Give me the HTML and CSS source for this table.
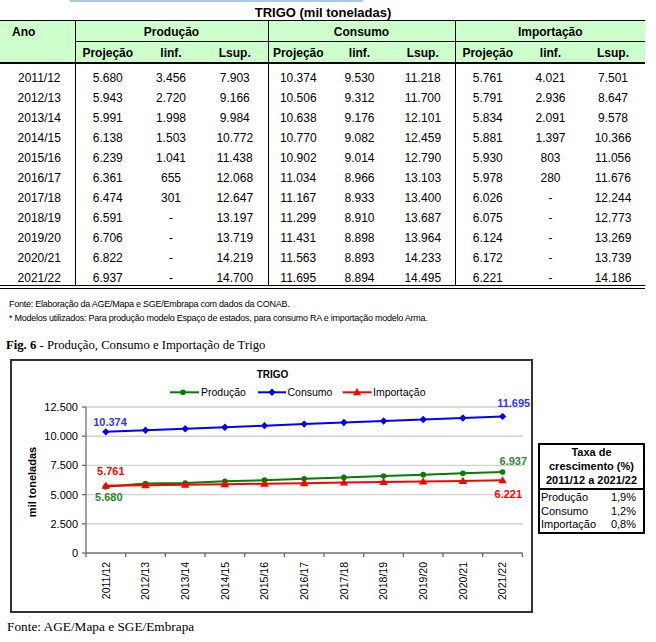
FILE: index.html
```html
<!DOCTYPE html>
<html lang="pt">
<head>
<meta charset="utf-8">
<title>Trigo</title>
<link rel="stylesheet" href="styles.css">
</head>
<body>
<div class="rule"></div>
<div class="title">TRIGO (mil toneladas)</div>
<table class="grid">
  <colgroup>
    <col style="width:75px"><col style="width:65px"><col style="width:62px"><col style="width:66px"><col style="width:60px"><col style="width:63px"><col style="width:64px"><col style="width:65px"><col style="width:61px"><col style="width:64px">
  </colgroup>
  <thead>
    <tr class="h1">
      <th rowspan="2" class="ano">Ano</th>
      <th colspan="3" class="g">Produção</th>
      <th colspan="3" class="g">Consumo</th>
      <th colspan="3" class="g">Importação</th>
    </tr>
    <tr class="h2">
      <th class="g">Projeção</th><th>linf.</th><th>Lsup.</th>
      <th class="g">Projeção</th><th>linf.</th><th>Lsup.</th>
      <th class="g">Projeção</th><th>linf.</th><th>Lsup.</th>
    </tr>
  </thead>
  <tbody>
    <tr class="first"><td class="yr">2011/12</td><td class="g">5.680</td><td>3.456</td><td>7.903</td><td class="g">10.374</td><td>9.530</td><td>11.218</td><td class="g">5.761</td><td>4.021</td><td>7.501</td></tr>
    <tr><td class="yr">2012/13</td><td class="g">5.943</td><td>2.720</td><td>9.166</td><td class="g">10.506</td><td>9.312</td><td>11.700</td><td class="g">5.791</td><td>2.936</td><td>8.647</td></tr>
    <tr><td class="yr">2013/14</td><td class="g">5.991</td><td>1.998</td><td>9.984</td><td class="g">10.638</td><td>9.176</td><td>12.101</td><td class="g">5.834</td><td>2.091</td><td>9.578</td></tr>
    <tr><td class="yr">2014/15</td><td class="g">6.138</td><td>1.503</td><td>10.772</td><td class="g">10.770</td><td>9.082</td><td>12.459</td><td class="g">5.881</td><td>1.397</td><td>10.366</td></tr>
    <tr><td class="yr">2015/16</td><td class="g">6.239</td><td>1.041</td><td>11.438</td><td class="g">10.902</td><td>9.014</td><td>12.790</td><td class="g">5.930</td><td>803</td><td>11.056</td></tr>
    <tr><td class="yr">2016/17</td><td class="g">6.361</td><td>655</td><td>12.068</td><td class="g">11.034</td><td>8.966</td><td>13.103</td><td class="g">5.978</td><td>280</td><td>11.676</td></tr>
    <tr><td class="yr">2017/18</td><td class="g">6.474</td><td>301</td><td>12.647</td><td class="g">11.167</td><td>8.933</td><td>13.400</td><td class="g">6.026</td><td>-</td><td>12.244</td></tr>
    <tr><td class="yr">2018/19</td><td class="g">6.591</td><td>-</td><td>13.197</td><td class="g">11.299</td><td>8.910</td><td>13.687</td><td class="g">6.075</td><td>-</td><td>12.773</td></tr>
    <tr><td class="yr">2019/20</td><td class="g">6.706</td><td>-</td><td>13.719</td><td class="g">11.431</td><td>8.898</td><td>13.964</td><td class="g">6.124</td><td>-</td><td>13.269</td></tr>
    <tr><td class="yr">2020/21</td><td class="g">6.822</td><td>-</td><td>14.219</td><td class="g">11.563</td><td>8.893</td><td>14.233</td><td class="g">6.172</td><td>-</td><td>13.739</td></tr>
    <tr class="last"><td class="yr">2021/22</td><td class="g">6.937</td><td>-</td><td>14.700</td><td class="g">11.695</td><td>8.894</td><td>14.495</td><td class="g">6.221</td><td>-</td><td>14.186</td></tr>
  </tbody>
</table>
<div class="notes">
  <p>Fonte: Elaboração da AGE/Mapa e SGE/Embrapa com dados da CONAB.</p>
  <p>* Modelos utilizados: Para produção modelo Espaço de estados, para consumo RA e importação modelo Arma.</p>
</div>
<p class="caption"><b>Fig. 6</b> - Produção, Consumo e Importação de Trigo</p>
<div class="chart-row">
  <div class="chart">
    <svg viewBox="12 362 519 250" width="519" height="250" xmlns="http://www.w3.org/2000/svg">
      <defs>
        <circle id="dot" r="2.8" fill="#008000"/>
        <polygon id="dia" points="0,-3.7 3.7,0 0,3.7 -3.7,0" fill="#0000ff"/>
        <polygon id="tri" points="0,-4.2 4.2,3 -4.2,3" fill="#ff0000"/>
      </defs>
      <text x="272.5" y="378.6" class="c-title">TRIGO</text>
      <line x1="170" y1="393.3" x2="199" y2="393.3" stroke="#008000" stroke-width="2"/>
      <use href="#dot" x="183" y="393.3"/>
      <text x="201" y="397.1" class="c-leg">Produção</text>
      <line x1="258" y1="393.3" x2="286" y2="393.3" stroke="#0000ff" stroke-width="2"/>
      <use href="#dia" x="272" y="393.3"/>
      <text x="287.5" y="397.1" class="c-leg">Consumo</text>
      <line x1="342.7" y1="393.3" x2="371.7" y2="393.3" stroke="#ff0000" stroke-width="2"/>
      <use href="#tri" x="357" y="393.3"/>
      <text x="373" y="397.1" class="c-leg">Importação</text>

      <g stroke="#d2d2d2" stroke-width="1.4">
        <line x1="86" y1="408" x2="522.7" y2="408"/>
        <line x1="86" y1="437.2" x2="522.7" y2="437.2"/>
        <line x1="86" y1="466.4" x2="522.7" y2="466.4"/>
        <line x1="86" y1="495.6" x2="522.7" y2="495.6"/>
        <line x1="86" y1="524.8" x2="522.7" y2="524.8"/>
      </g>
      <g stroke="#6e6e6e" stroke-width="1.3">
        <line x1="86" y1="408" x2="86" y2="554"/>
        <line x1="86" y1="554" x2="522.7" y2="554"/>
        <line x1="82" y1="408" x2="86" y2="408"/>
        <line x1="82" y1="437.2" x2="86" y2="437.2"/>
        <line x1="82" y1="466.4" x2="86" y2="466.4"/>
        <line x1="82" y1="495.6" x2="86" y2="495.6"/>
        <line x1="82" y1="524.8" x2="86" y2="524.8"/>
        <line x1="82" y1="554" x2="86" y2="554"/>
        <line x1="86" y1="554" x2="86" y2="558"/>
        <line x1="125.7" y1="554" x2="125.7" y2="558"/>
        <line x1="165.3" y1="554" x2="165.3" y2="558"/>
        <line x1="205" y1="554" x2="205" y2="558"/>
        <line x1="244.7" y1="554" x2="244.7" y2="558"/>
        <line x1="284.4" y1="554" x2="284.4" y2="558"/>
        <line x1="324" y1="554" x2="324" y2="558"/>
        <line x1="363.7" y1="554" x2="363.7" y2="558"/>
        <line x1="403.4" y1="554" x2="403.4" y2="558"/>
        <line x1="443" y1="554" x2="443" y2="558"/>
        <line x1="482.7" y1="554" x2="482.7" y2="558"/>
        <line x1="522.4" y1="554" x2="522.4" y2="558"/>
      </g>
      <g class="c-y">
        <text x="78" y="411.9">12.500</text>
        <text x="78" y="441.1">10.000</text>
        <text x="78" y="470.3">7.500</text>
        <text x="78" y="499.5">5.000</text>
        <text x="78" y="528.7">2.500</text>
        <text x="78" y="557.9">0</text>
      </g>
      <g class="c-x">
        <text transform="translate(109.6 563) rotate(-90)">2011/12</text>
        <text transform="translate(149.3 563) rotate(-90)">2012/13</text>
        <text transform="translate(189 563) rotate(-90)">2013/14</text>
        <text transform="translate(228.6 563) rotate(-90)">2014/15</text>
        <text transform="translate(268.3 563) rotate(-90)">2015/16</text>
        <text transform="translate(308 563) rotate(-90)">2016/17</text>
        <text transform="translate(347.6 563) rotate(-90)">2017/18</text>
        <text transform="translate(387.3 563) rotate(-90)">2018/19</text>
        <text transform="translate(427 563) rotate(-90)">2019/20</text>
        <text transform="translate(466.6 563) rotate(-90)">2020/21</text>
        <text transform="translate(506.3 563) rotate(-90)">2021/22</text>
      </g>
      <text class="c-ytitle" transform="translate(36.4 483) rotate(-90)">mil toneladas</text>

      <polyline fill="none" stroke="#0000ff" stroke-width="2" points="105.8,432.83 145.5,431.29 185.2,429.75 224.9,428.21 264.5,426.66 304.2,425.12 343.9,423.57 383.6,422.03 423.2,420.49 462.9,418.94 502.6,417.4"/>
      <polyline fill="none" stroke="#008000" stroke-width="2" points="105.8,487.66 145.5,484.59 185.2,484.03 224.9,482.31 264.5,481.13 304.2,479.7 343.9,478.38 383.6,477.02 423.2,475.67 462.9,474.32 502.6,472.98"/>
      <polyline fill="none" stroke="#ff0000" stroke-width="2" points="105.8,486.71 145.5,486.36 185.2,485.86 224.9,485.31 264.5,484.74 304.2,484.18 343.9,483.62 383.6,483.04 423.2,482.47 462.9,481.91 502.6,481.34"/>

      <use href="#dia" x="105.8" y="432.83"/><use href="#dia" x="145.5" y="431.29"/><use href="#dia" x="185.2" y="429.75"/><use href="#dia" x="224.9" y="428.21"/><use href="#dia" x="264.5" y="426.66"/><use href="#dia" x="304.2" y="425.12"/><use href="#dia" x="343.9" y="423.57"/><use href="#dia" x="383.6" y="422.03"/><use href="#dia" x="423.2" y="420.49"/><use href="#dia" x="462.9" y="418.94"/><use href="#dia" x="502.6" y="417.4"/>
      <use href="#dot" x="105.8" y="487.66"/><use href="#dot" x="145.5" y="484.59"/><use href="#dot" x="185.2" y="484.03"/><use href="#dot" x="224.9" y="482.31"/><use href="#dot" x="264.5" y="481.13"/><use href="#dot" x="304.2" y="479.7"/><use href="#dot" x="343.9" y="478.38"/><use href="#dot" x="383.6" y="477.02"/><use href="#dot" x="423.2" y="475.67"/><use href="#dot" x="462.9" y="474.32"/><use href="#dot" x="502.6" y="472.98"/>
      <use href="#tri" x="105.8" y="486.71"/><use href="#tri" x="145.5" y="486.36"/><use href="#tri" x="185.2" y="485.86"/><use href="#tri" x="224.9" y="485.31"/><use href="#tri" x="264.5" y="484.74"/><use href="#tri" x="304.2" y="484.18"/><use href="#tri" x="343.9" y="483.62"/><use href="#tri" x="383.6" y="483.04"/><use href="#tri" x="423.2" y="482.47"/><use href="#tri" x="462.9" y="481.91"/><use href="#tri" x="502.6" y="481.34"/>

      <text class="c-lab blue" x="110" y="426.6">10.374</text>
      <text class="c-lab red" x="110.8" y="476.3">5.761</text>
      <text class="c-lab green" x="108.8" y="502.3">5.680</text>
      <text class="c-lab blue" x="513.7" y="408.3">11.695</text>
      <text class="c-lab green" x="513.3" y="466.3">6.937</text>
      <text class="c-lab red" x="508.3" y="499">6.221</text>
    </svg>
  </div>
  <div class="rate">
    <div class="rate-head">Taxa de<br>crescimento (%)<br>2011/12 a 2021/22</div>
    <div class="rate-body">
      <div class="rate-row"><span>Produção</span><span>1,9%</span></div>
      <div class="rate-row"><span>Consumo</span><span>1,2%</span></div>
      <div class="rate-row"><span>Importação</span><span>0,8%</span></div>
    </div>
  </div>
</div>
<p class="source">Fonte: AGE/Mapa e SGE/Embrapa</p>
</body>
</html>
```

FILE: styles.css
```css
* { box-sizing: border-box; }
html, body { margin: 0; padding: 0; }
body {
  width: 656px;
  height: 642px;
  overflow: hidden;
  background: #fff;
  color: #000;
  font-family: "Liberation Sans", Arial, sans-serif;
}
p { margin: 0; }

.rule {
  margin-left: 70px;
  width: 293px;
  height: 2px;
  background: #a9c9ea;
}
.title {
  width: 646px;
  margin-top: 4px;
  text-align: center;
  font-weight: bold;
  font-size: 13px;
  line-height: 14px;
}

.grid {
  border-collapse: collapse;
  table-layout: fixed;
  width: 645px;
  font-size: 12px;
}
.grid th {
  background: #ccffcc;
  font-weight: bold;
  text-align: center;
  padding: 0;
}
.grid .h1 th {
  border-top: 1px solid #000;
  border-bottom: 1px solid #000;
  height: 21px;
  padding-top: 3px;
  line-height: 16px;
  vertical-align: top;
}
.grid .h2 th {
  border-bottom: 2px solid #000;
  height: 21px;
  padding-top: 4px;
  line-height: 15px;
  vertical-align: top;
}
.grid th.ano {
  text-align: left;
  padding-left: 12px;
  border-bottom: 2px solid #000;
}
.grid .g { border-left: 1px solid #000; }
.grid td {
  height: 20px;
  padding: 6px 0 0;
  line-height: 14px;
  text-align: center;
  vertical-align: top;
}
.grid tr.first td {
  height: 21px;
  padding-top: 7px;
}
.grid td.yr { padding-left: 4px; }
.grid tr.last td { border-bottom: 4px double #000; }

.notes {
  margin-top: 8px;
  padding-left: 9px;
  font-size: 9px;
  line-height: 14.3px;
  letter-spacing: -0.25px;
}
.caption {
  margin: 12px 0 0 6px;
  font-family: "Liberation Serif", "Times New Roman", serif;
  font-size: 12.7px;
  line-height: 16px;
}

.chart-row {
  display: flex;
  align-items: flex-start;
  margin-top: 6px;
}
.chart {
  margin-left: 10px;
  width: 523px;
  height: 254px;
  border: 2px solid #333;
}
.chart svg { display: block; }
.chart text { font-family: "Liberation Sans", Arial, sans-serif; }
.c-title { font-size: 10px; font-weight: bold; text-anchor: middle; }
.c-leg { font-size: 10.5px; }
.c-y text { font-size: 11px; text-anchor: end; }
.c-x text { font-size: 10.5px; text-anchor: end; }
.c-ytitle { font-size: 11px; font-weight: bold; text-anchor: middle; }
.c-lab { font-size: 11px; font-weight: bold; text-anchor: middle; }
.c-lab.blue { fill: #3333ff; }
.c-lab.red { fill: #ff0000; }
.c-lab.green { fill: #2a8a2a; }

.rate {
  margin-left: 5px;
  margin-top: 84px;
  width: 107px;
  border: 2px solid #000;
  font-size: 11px;
}
.rate-head {
  text-align: center;
  font-weight: bold;
  line-height: 14px;
  padding-bottom: 1px;
  border-bottom: 2px solid #000;
}
.rate-body {
  padding: 1px 7px 0 1px;
  line-height: 13.5px;
}
.rate-row {
  display: flex;
  justify-content: space-between;
}

.source {
  margin: 6px 0 0 7px;
  font-family: "Liberation Serif", "Times New Roman", serif;
  font-size: 13.3px;
  line-height: 16px;
}
```
